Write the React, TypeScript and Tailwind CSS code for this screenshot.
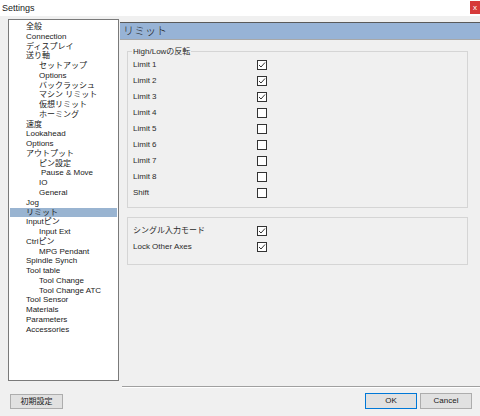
import React from 'react';

type TreeItem = { label: string; indent: number; selected?: boolean };

const tree: TreeItem[] = [
  { label: '全般', indent: 0 },
  { label: 'Connection', indent: 0 },
  { label: 'ディスプレイ', indent: 0 },
  { label: '送り軸', indent: 0 },
  { label: 'セットアップ', indent: 1 },
  { label: 'Options', indent: 1 },
  { label: 'バックラッシュ', indent: 1 },
  { label: 'マシン リミット', indent: 1 },
  { label: '仮想リミット', indent: 1 },
  { label: 'ホーミング', indent: 1 },
  { label: '速度', indent: 0 },
  { label: 'Lookahead', indent: 0 },
  { label: 'Options', indent: 0 },
  { label: 'アウトプット', indent: 0 },
  { label: 'ピン設定', indent: 1 },
  { label: 'Pause & Move', indent: 2 },
  { label: 'IO', indent: 1 },
  { label: 'General', indent: 1 },
  { label: 'Jog', indent: 0 },
  { label: 'リミット', indent: 0, selected: true },
  { label: 'Inputピン', indent: 0 },
  { label: 'Input Ext', indent: 1 },
  { label: 'Ctrlピン', indent: 0 },
  { label: 'MPG Pendant', indent: 1 },
  { label: 'Spindle Synch', indent: 0 },
  { label: 'Tool table', indent: 0 },
  { label: 'Tool Change', indent: 1 },
  { label: 'Tool Change ATC', indent: 1 },
  { label: 'Tool Sensor', indent: 0 },
  { label: 'Materials', indent: 0 },
  { label: 'Parameters', indent: 0 },
  { label: 'Accessories', indent: 0 },
];

const limits: [string, boolean][] = [
  ['Limit 1', true],
  ['Limit 2', true],
  ['Limit 3', true],
  ['Limit 4', false],
  ['Limit 5', false],
  ['Limit 6', false],
  ['Limit 7', false],
  ['Limit 8', false],
  ['Shift', false],
];

const Checkbox = ({ checked }: { checked: boolean }) => (
  <div className="w-[10px] h-[10px] border border-[#333333] bg-white flex items-center justify-center">
    {checked && (
      <svg width="8" height="8" viewBox="0 0 8 8">
        <path d="M1 4 L3 6 L7 1.5" fill="none" stroke="#333333" strokeWidth="1" />
      </svg>
    )}
  </div>
);

const Row = ({ label, checked }: { label: string; checked: boolean }) => (
  <div className="h-[16px] flex items-center">
    <span className="w-[124px] text-[8px] text-[#2b2b2b]">{label}</span>
    <Checkbox checked={checked} />
  </div>
);

const indentClass = ['pl-[16px]', 'pl-[29px]', 'pl-[31px]'];

export default function App() {
  return (
    <div
      className="w-[480px] h-[416px] bg-[#f0f0f0] flex flex-col overflow-hidden text-[#1a1a1a]"
      style={{ fontFamily: '"Liberation Sans", "Noto Sans CJK JP", sans-serif' }}
    >
      {/* title bar */}
      <div className="h-[16px] bg-white flex items-start justify-between">
        <span className="pl-[2px] pt-[2px] text-[9px] leading-[12px]">Settings</span>
        <div className="mt-[1px] w-[10px] h-[13px] bg-[#d63a3a] flex items-center justify-center text-white text-[8px] leading-none">
          x
        </div>
      </div>

      <div className="flex-1 flex">
        {/* left: tree */}
        <div className="w-[120px] flex flex-col pl-[8px] pt-[3px]">
          <div className="w-[111px] h-[362px] bg-white border border-[#7a7a7a] pt-[2px]">
            {tree.map((t, i) => (
              <div
                key={i}
                className={`h-[9.77px] leading-[9.77px] text-[8px] whitespace-nowrap mx-[1px] ${indentClass[t.indent]} ${
                  t.selected ? 'bg-[#99b4d1]' : ''
                }`}
              >
                {t.label}
              </div>
            ))}
          </div>
          <button className="mt-[13px] ml-[2px] w-[53px] h-[15px] bg-[#e1e1e1] border border-[#adadad] text-[8px] leading-none">
            初期設定
          </button>
        </div>

        {/* right: page */}
        <div className="flex-1 flex flex-col pt-[6px]">
          <div className="h-[18px] border-t border-t-[#5a5a5a] border-b border-b-[#a8a8a8] bg-[#97b3d6] pl-[3px] flex items-center text-[11px] font-light">
            リミット
          </div>

          <div className="flex-1 pl-[7px] pr-[12px] pt-[11px]">
            <div className="relative border border-[#d5d5d5] pl-[5px] pt-[5px] pb-[6px]">
              <span className="absolute left-[4px] top-[-6px] px-[1px] bg-[#f0f0f0] text-[8px] leading-[11px] text-[#2b2b2b]">
                High/Lowの反転
              </span>
              {limits.map(([l, c]) => (
                <Row key={l} label={l} checked={c} />
              ))}
            </div>

            <div className="mt-[9px] border border-[#d5d5d5] pl-[5px] pt-[5px] pb-[9px]">
              <Row label="シングル入力モード" checked />
              <Row label="Lock Other Axes" checked />
            </div>
          </div>

          <div className="ml-[2px] h-[2px] border-t border-t-[#a0a0a0] border-b border-b-white" />
          <div className="flex justify-end gap-[3px] pr-[8px] pt-[5px] pb-[7px]">
            <button className="w-[52px] h-[16px] bg-[#e1e1e1] border border-[#0078d7] text-[8px] leading-none">
              OK
            </button>
            <button className="w-[52px] h-[16px] bg-[#e1e1e1] border border-[#adadad] text-[8px] leading-none">
              Cancel
            </button>
          </div>
        </div>
      </div>
    </div>
  );
}
